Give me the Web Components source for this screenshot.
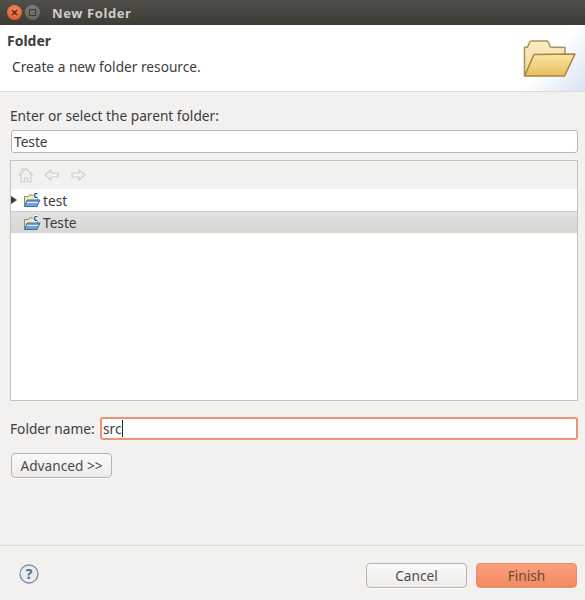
<!DOCTYPE html>
<html>
<head>
<meta charset="utf-8">
<title>New Folder</title>
<style>
  html, body { margin: 0; height: 100%; }
  body { font: 13.7px "Noto Sans", sans-serif; color: #3c3c3c; background: #f2f1f0; overflow: hidden; }
</style>
</head>
<body>
<new-folder-dialog></new-folder-dialog>

<script>
const folderIcon = `
  <svg class="icon" width="18" height="24" viewBox="0 0 18 24">
    <path d="M1.500 17.500V8.500h4l1-1.500h3l1 1.500h4v9z" fill="#f6e9b8" stroke="#8f8a6c"/>
    <path d="M1.500 18.500l2.500-6.500h13l-3 6.500z" fill="#6fa3dc" stroke="#3d6ea8"/>
    <path d="M4 14.500h11" stroke="#e4eefb"/>
    <text x="10.500" y="9.500" font-size="8" font-weight="700" font-family="Noto Sans" fill="#27408b" stroke="#fff" stroke-width="1.500" paint-order="stroke">c</text>
  </svg>`;

class DialogTitlebar extends HTMLElement {
  constructor () {
    super();
    this.attachShadow({ mode: 'open' }).innerHTML = `
      <style>
        :host {
          display: flex;
          align-items: center;
          height: 25px;
          padding-left: 7px;
          box-sizing: border-box;
          background: linear-gradient(#514f49, #3c3b37);
          color: #d0cdc7;
          font: 700 13px "Noto Sans", sans-serif;
          letter-spacing: .6px;
        }
        .close, .max { width: 15px; height: 15px; border-radius: 50%; display: flex; align-items: center; justify-content: center; }
        .close { background: radial-gradient(circle at 50% 35%, #f58a5e, #df4f1d); }
        .max { background: linear-gradient(#7d7b75, #66645e); margin-left: 3px; }
        .max i { width: 5px; height: 5px; border: 1px solid #3c3b37; }
        span { margin-left: 12px; }
      </style>
      <div class="close"><svg width="7" height="7" viewBox="0 0 7 7"><path d="M1 1l5 5M6 1L1 6" stroke="#5b2410" stroke-width="1.500"/></svg></div>
      <div class="max"><i></i></div>
      <span><slot></slot></span>`;
  }
}

class DialogBanner extends HTMLElement {
  constructor () {
    super();
    this.attachShadow({ mode: 'open' }).innerHTML = `
      <style>
        :host {
          display: flex;
          justify-content: space-between;
          height: 67px;
          box-sizing: border-box;
          border-bottom: 1px solid #dcdad7;
          background: linear-gradient(131deg, #fff 90%, #d9e2f3 100%);
          color: #3c3c3c;
        }
        h1 { font-size: 14px; font-weight: 700; line-height: 19px; margin: 6px 0 0 7px; }
        p { font-size: 13.7px; line-height: 19px; margin: 7px 0 0 12px; }
        svg { margin: 13px 9px 0 0; }
      </style>
      <div>
        <h1><slot name="title"></slot></h1>
        <p><slot name="message"></slot></p>
      </div>
      <svg width="53" height="40" viewBox="0 0 53 40">
        <defs>
          <linearGradient id="back" x1="0" y1="0" x2="0" y2="1"><stop offset="0" stop-color="#fbeec4"/><stop offset="1" stop-color="#eed596"/></linearGradient>
          <linearGradient id="front" x1="0" y1="0" x2="0" y2="1"><stop offset="0" stop-color="#fae6a0"/><stop offset="1" stop-color="#e6bd62"/></linearGradient>
        </defs>
        <path d="M1.500 38V9.500l3-.5 2-4.500q.5-1.500 2-1.500h15q1.500 0 2 1.500l2 4.500 14.500.5V16" fill="url(#back)" stroke="#a89058" stroke-width="1.500"/>
        <path d="M1.500 38l9.500-21.500 41-.5-10.500 22z" fill="url(#front)" stroke="#a8843c" stroke-width="1.500" stroke-linejoin="round"/>
      </svg>`;
  }
}

class TextField extends HTMLElement {
  constructor () {
    super();
    this.attachShadow({ mode: 'open' }).innerHTML = `
      <style>
        :host {
          display: flex;
          align-items: center;
          height: 23px;
          box-sizing: border-box;
          padding-left: 2px;
          background: #fff;
          border: 1px solid #b8b5b0;
          border-radius: 3px;
          color: #3c3c3c;
        }
        :host([focused]) { border: 2px solid #ea9475; padding-left: 1px; }
        i { display: none; width: 1px; height: 17px; background: #222; }
        :host([focused]) i { display: block; }
      </style>
      <slot></slot><i></i>`;
  }
}

class PushButton extends HTMLElement {
  constructor () {
    super();
    this.attachShadow({ mode: 'open' }).innerHTML = `
      <style>
        :host {
          display: flex;
          align-items: center;
          justify-content: center;
          width: 101px;
          height: 25px;
          box-sizing: border-box;
          border: 1px solid #b7b4af;
          border-radius: 4px;
          background: linear-gradient(#fbfafa, #ecebe9);
          box-shadow: 0 1px 0 #fff;
          color: #4c4c4c;
        }
        :host([default]) {
          border-color: #e58f6d;
          background: linear-gradient(#fa9f7c, #f28a62);
          color: #6a4a3c;
        }
      </style>
      <slot></slot>`;
  }
}

class TreeRow extends HTMLElement {
  constructor () {
    super();
    this.attachShadow({ mode: 'open' }).innerHTML = `
      <style>
        :host {
          display: flex;
          align-items: center;
          height: 22px;
          box-sizing: border-box;
          color: #3c3c3c;
        }
        :host([selected]) { background: linear-gradient(#e2e1df, #d8d6d3); border-top: 1px solid #cfcdca; }
        .twist { width: 12px; height: 8px; flex: none; }
        .icon { flex: none; margin: -1px 0; }
        .label { margin-left: 2px; }
      </style>
      <svg class="twist" viewBox="0 0 12 8"><path class="arrow" d="M0 0l6 4-6 4z" fill="#3c3c3c"/></svg>
      ${folderIcon}
      <span class="label"><slot></slot></span>`;
  }

  connectedCallback() {
    if (!this.hasAttribute('expandable')) {
      this.shadowRoot.querySelector('.arrow').remove();
    }
  }
}

class FolderTree extends HTMLElement {
  constructor () {
    super();
    this.attachShadow({ mode: 'open' }).innerHTML = `
      <style>
        :host {
          display: flex;
          flex-direction: column;
          height: 241px;
          box-sizing: border-box;
          border: 1px solid #c4c2be;
          background: #fff;
        }
        .toolbar {
          display: flex;
          align-items: center;
          gap: 10px;
          height: 28px;
          flex: none;
          padding-left: 7px;
          background: #f2f1f0;
        }
        svg { fill: #f2f1f0; stroke: #cfcdca; stroke-width: 1.200; }
      </style>
      <div class="toolbar">
        <svg width="16" height="16" viewBox="0 0 16 16"><path d="M3 15V8H1.500L4 5.500V2h2v1.500L8 1.500 14.500 8H13v7H9.500v-4h-3v4z"/></svg>
        <svg width="16" height="14" viewBox="0 0 16 14"><path d="M1 7l6-5v3h7v4H7v3z"/></svg>
        <svg width="16" height="14" viewBox="0 0 16 14"><path d="M15 7L9 2v3H2v4h7v3z"/></svg>
      </div>
      <slot></slot>`;
  }
}

class NewFolderDialog extends HTMLElement {
  constructor () {
    super();
    this.attachShadow({ mode: 'open' }).innerHTML = `
      <style>
        :host {
          display: flex;
          flex-direction: column;
          height: 600px;
          background: #f2f1f0;
          color: #3c3c3c;
        }
        .body { display: flex; flex-direction: column; padding: 14px 7px 0 10px; height: 453px; box-sizing: border-box; }
        .parent-label { line-height: 19px; height: 24px; }
        .parent { margin: 0 0 7px 1px; }
        .name-row { display: flex; align-items: center; margin-top: 16px; }
        .name-row span { width: 90px; flex: none; }
        .name-row text-field { flex: 1; }
        .advanced { margin: 13px 0 0 1px; }
        .footer {
          flex: 1;
          display: flex;
          align-items: center;
          border-top: 1px solid #dddbd8;
          padding: 5px 8px 0 19px;
          gap: 9px;
        }
        .help { margin-right: auto; margin-top: -3px; }
      </style>
      <dialog-titlebar>New Folder</dialog-titlebar>
      <dialog-banner>
        <span slot="title">Folder</span>
        <span slot="message">Create a new folder resource.</span>
      </dialog-banner>
      <div class="body">
        <div class="parent-label">Enter or select the parent folder:</div>
        <text-field class="parent">Teste</text-field>
        <folder-tree>
          <tree-row expandable>test</tree-row>
          <tree-row selected>Teste</tree-row>
        </folder-tree>
        <div class="name-row">
          <span>Folder name:</span>
          <text-field focused>src</text-field>
        </div>
        <push-button class="advanced">Advanced &gt;&gt;</push-button>
      </div>
      <div class="footer">
        <svg class="help" width="20" height="20" viewBox="0 0 20 20">
          <circle cx="10" cy="10" r="9" fill="#e6edf5" stroke="#7f8c9b" stroke-width="1.300"/>
          <text x="10" y="15" text-anchor="middle" font-size="14" font-weight="700" font-family="Noto Sans" fill="#5c6773">?</text>
        </svg>
        <push-button>Cancel</push-button>
        <push-button default>Finish</push-button>
      </div>`;
  }
}

customElements.define('dialog-titlebar', DialogTitlebar);
customElements.define('dialog-banner', DialogBanner);
customElements.define('text-field', TextField);
customElements.define('push-button', PushButton);
customElements.define('tree-row', TreeRow);
customElements.define('folder-tree', FolderTree);
customElements.define('new-folder-dialog', NewFolderDialog);
</script>
</body>
</html>
